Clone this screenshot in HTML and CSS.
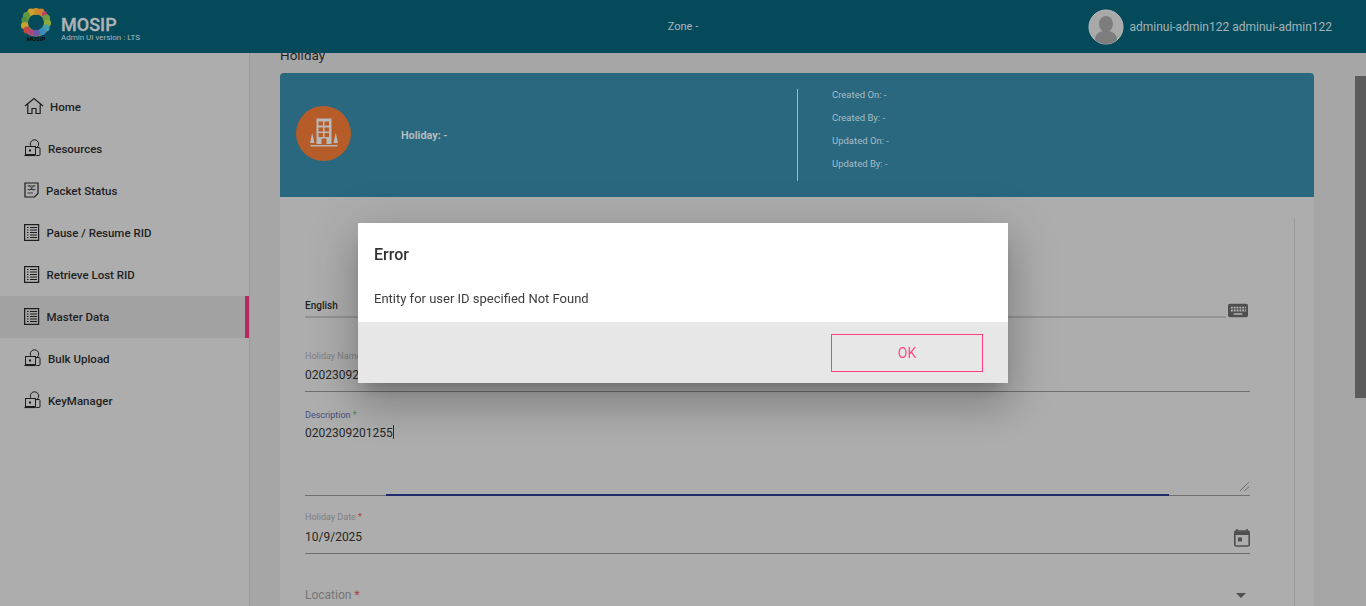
FILE: index.html
```html
<!DOCTYPE html>
<html lang="en">

<head>
    <meta charset="UTF-8">
    <meta name="viewport" content="width=device-width, initial-scale=1.0">
    <title>Holiday - Master Data</title>
    <link rel="stylesheet" href="styles.css">
</head>

<body>

    <header class="topbar">
        <div class="brand">
            <svg class="brand-logo" width="34" height="34" viewBox="0 0 34 34">
                <circle cx="17" cy="15.500" r="11" fill="none" stroke="#8f9a3a" stroke-width="6"/>
                <circle cx="17" cy="4.500" r="3.600" fill="#c98a2e"/>
                <circle cx="12" cy="5" r="3.400" fill="#c9a22e"/>
                <circle cx="22" cy="5" r="3.400" fill="#d0802e"/>
                <circle cx="25.500" cy="7" r="2.600" fill="#b5456a"/>
                <circle cx="7.500" cy="8.500" r="3.400" fill="#5f9a40"/>
                <circle cx="27.500" cy="11" r="3.600" fill="#6f9c3c"/>
                <circle cx="5.500" cy="13" r="3.200" fill="#4f8f45"/>
                <circle cx="28.500" cy="16" r="3.600" fill="#8fa83a"/>
                <circle cx="5.500" cy="18.500" r="3.600" fill="#c9a22e"/>
                <circle cx="27" cy="21" r="3.600" fill="#3f9fb0"/>
                <circle cx="8" cy="23" r="3.600" fill="#c24a3f"/>
                <circle cx="23" cy="24.500" r="3.600" fill="#3a8cc0"/>
                <circle cx="12.500" cy="25.500" r="3.200" fill="#b0467f"/>
                <circle cx="17.500" cy="26" r="3.600" fill="#6c5aa5"/>
                <circle cx="17" cy="15.500" r="7.400" fill="#054a5b"/>
                <text class="logo-word" x="17" y="33.500" text-anchor="middle">MOSIP</text>
            </svg>
            <div class="brand-text">
                <div class="brand-name">MOSIP</div>
                <div class="brand-version">Admin UI version : LTS</div>
            </div>
        </div>
        <div class="zone">Zone -</div>
        <div class="user">
            <svg class="avatar" width="36" height="36" viewBox="0 0 36 36">
                <circle cx="18" cy="18" r="17" fill="#a9a9a9" stroke="#bdbdbd" stroke-width="1"/>
                <ellipse cx="18" cy="15" rx="7" ry="8" fill="#7d7d7d"/>
                <path d="M7 31c0-6 4-8 8-9h6c4 1 8 3 8 9a17 17 0 0 1-22 0z" fill="#7d7d7d"/>
            </svg>
            <span class="user-name">adminui-admin122 adminui-admin122</span>
        </div>
    </header>

    <div class="layout">
        <nav class="sidebar">
            <a class="nav-item">
                <svg class="nav-icon" width="20" height="18" viewBox="0 0 20 18">
                    <path d="M1 9 10 1.500 19 9M3.800 7.500V16.500H8V11.500H12V16.500H16.200V7.500" fill="none" stroke="#1c1c1c" stroke-width="1.200"/>
                </svg>
                <span class="nav-home">Home</span>
            </a>
            <a class="nav-item">
                <svg class="nav-icon" width="18" height="18" viewBox="0 0 18 18">
                    <use href="#person-icon"/>
                </svg>
                <span class="nav-res">Resources</span>
            </a>
            <a class="nav-item">
                <svg class="nav-icon" width="16" height="16" viewBox="0 0 16 16">
                    <path d="M1 1h13v10.500L10.500 15H1z" fill="none" stroke="#1c1c1c" stroke-width="1.200"/>
                    <path d="M3.500 4H11.500M3.500 7.500H11.500M3.500 11H9M5 3 9.500 8.500M10.500 3 5.500 8.500" fill="none" stroke="#333" stroke-width=".9"/>
                </svg>
                <span class="nav-packet">Packet Status</span>
            </a>
            <a class="nav-item">
                <svg class="nav-icon" width="16" height="17" viewBox="0 0 16 17">
                    <use href="#list-icon"/>
                </svg>
                <span class="nav-list">Pause / Resume RID</span>
            </a>
            <a class="nav-item">
                <svg class="nav-icon" width="16" height="17" viewBox="0 0 16 17">
                    <use href="#list-icon"/>
                </svg>
                <span class="nav-list">Retrieve Lost RID</span>
            </a>
            <a class="nav-item active">
                <svg class="nav-icon" width="16" height="17" viewBox="0 0 16 17">
                    <use href="#list-icon"/>
                </svg>
                <span class="nav-list">Master Data</span>
            </a>
            <a class="nav-item">
                <svg class="nav-icon" width="18" height="18" viewBox="0 0 18 18">
                    <use href="#person-icon"/>
                </svg>
                <span class="nav-res">Bulk Upload</span>
            </a>
            <a class="nav-item">
                <svg class="nav-icon" width="18" height="18" viewBox="0 0 18 18">
                    <use href="#person-icon"/>
                </svg>
                <span class="nav-res">KeyManager</span>
            </a>
            <svg class="icon-defs" width="0" height="0">
                <symbol id="list-icon" viewBox="0 0 16 17">
                    <rect x=".6" y=".6" width="14" height="15.800" fill="none" stroke="#1c1c1c" stroke-width="1.200"/>
                    <path d="M3 3.500H4.500M6 3.500H13M3 6H4.500M6 6H13M3 8.500H4.500M6 8.500H13M3 11H4.500M6 11H13M3 13.500H4.500M6 13.500H13" stroke="#1c1c1c" stroke-width="1"/>
                </symbol>
                <symbol id="person-icon" viewBox="0 0 18 18">
                    <circle cx="10.500" cy="5" r="4.200" fill="none" stroke="#1c1c1c" stroke-width="1"/>
                    <rect x="1.500" y="7.500" width="10" height="8" fill="#adadad" stroke="#1c1c1c" stroke-width="1"/>
                    <rect x="11.500" y="8.500" width="4.500" height="8" rx="1" fill="none" stroke="#1c1c1c" stroke-width="1"/>
                    <path d="M.5 16.500H11.500" stroke="#1c1c1c" stroke-width="1.200"/>
                    <rect x="5" y="10.500" width="2" height="2" fill="#1c1c1c"/>
                </symbol>
            </svg>
        </nav>

        <main class="content">
            <h1 class="page-title">Holiday</h1>
            <section class="card-head">
                <div class="head-left">
                    <div class="head-badge">
                        <svg width="30" height="30" viewBox="0 0 30 30">
                            <path d="M7.500 .5h15V26h-15z" fill="#b9b9b9"/>
                            <path d="M9.500 3.500h4.500v4h-4.500zM15.500 3.500h4.500v4h-4.500zM9.500 9.500h4.500v4h-4.500zM15.500 9.500h4.500v4h-4.500zM9.500 15h4.500v4h-4.500zM15.500 15h4.500v4h-4.500zM12.500 20.500h5V26h-5z" fill="#b55c28"/>
                            <path d="M3.200 15 5.500 25H1z" fill="#b9b9b9"/>
                            <path d="M26.700 15 29 25h-4.500z" fill="#b9b9b9"/>
                            <path d="M1.500 27h27v1.500h-27z" fill="#b9b9b9"/>
                        </svg>
                    </div>
                    <div class="head-title">Holiday: -</div>
                </div>
                <div class="head-meta">
                    <div class="meta-list">
                        <div>Created On: -</div>
                        <div>Created By: -</div>
                        <div>Updated On: -</div>
                        <div>Updated By: -</div>
                    </div>
                </div>
            </section>
            <section class="card-body">
                <form class="form-col">
                    <div class="field-lang">
                        <div class="lang-input">English</div>
                        <svg class="keyboard" width="20" height="15" viewBox="0 0 21 15">
                            <rect width="21" height="14" x="0" y="0.500" rx="2" fill="#4f4f4f"/>
                            <path d="M3 3.500h2v2H3zM6 3.500h2v2H6zM9 3.500h2v2H9zM12 3.500h2v2h-2zM15 3.500h2v2h-2zM18 3.500h1v2h-1zM3 6.500h2v2H3zM6 6.500h2v2H6zM9 6.500h2v2H9zM12 6.500h2v2h-2zM15 6.500h2v2h-2zM18 6.500h1v2h-1zM6 10.500h9v1.500H6z" fill="#b5b5b5"/>
                        </svg>
                    </div>
                    <div class="field field-name">
                        <label class="field-label">Holiday Name</label>
                        <div class="field-value">0202309201255</div>
                    </div>
                    <div class="field field-desc">
                        <label class="field-label focused">Description <span class="mark-ok">*</span></label>
                        <div class="field-value">0202309201255<span class="caret"></span></div>
                        <svg class="resizer" width="9" height="9" viewBox="0 0 9 9">
                            <path d="M0 9 9 0M4.500 9 9 4.500" stroke="#333" stroke-width=".8" stroke-dasharray="1 .5"/>
                        </svg>
                        <div class="focus-line"></div>
                    </div>
                    <div class="field field-date">
                        <label class="field-label">Holiday Date <span class="mark-req">*</span></label>
                        <div class="field-value">10/9/2025</div>
                        <svg class="calendar" width="16" height="18" viewBox="0 0 16 18">
                            <path d="M3 0v2M13 0v2" stroke="#4f4f4f" stroke-width="1.600"/>
                            <rect x=".8" y="2" width="14.400" height="15" rx="1.500" fill="none" stroke="#4f4f4f" stroke-width="1.600"/>
                            <path d="M1 2.500h14v3.500H1z" fill="#4f4f4f"/>
                            <rect x="4" y="8.500" width="4" height="4" fill="#4f4f4f"/>
                        </svg>
                    </div>
                    <div class="field-select">
                        <span>Location <span class="mark-req">*</span></span>
                        <span class="select-arrow"></span>
                    </div>
                </form>
            </section>
        </main>

        <div class="scroll-track">
            <div class="scroll-thumb"></div>
        </div>
    </div>

    <div class="backdrop">
        <div class="dialog">
            <div class="dialog-main">
                <h2 class="dialog-title">Error</h2>
                <p class="dialog-msg">Entity for user ID specified Not Found</p>
            </div>
            <div class="dialog-foot">
                <button class="dialog-btn" type="button">OK</button>
            </div>
        </div>
    </div>

</body>

</html>
```

FILE: styles.css
```css
* {
    box-sizing: border-box;
}

html,
body {
    height: 100%;
}

body {
    margin: 0;
    padding: 0;
    overflow: hidden;
    display: flex;
    flex-direction: column;
    font-family: 'Roboto', 'Liberation Sans', sans-serif;
    background-color: #a6a6a6;
    color: #1c1c1c;
}

/* top bar */
.topbar {
    flex: 0 0 53px;
    display: grid;
    grid-template-columns: 1fr auto 1fr;
    align-items: center;
    background-color: #054a5b;
    position: relative;
    z-index: 2;
}

.brand {
    display: flex;
    align-items: center;
    padding-left: 19px;
}

.brand-logo {
    display: block;
    margin-top: -6px;
}

.logo-word {
    font-family: 'Roboto', sans-serif;
    font-size: 6px;
    font-weight: 700;
    fill: #0c0c0c;
}

.brand-text {
    margin-left: 8px;
    margin-top: 4px;
}

.brand-name {
    font-size: 18px;
    font-weight: 500;
    line-height: 17px;
    color: #aeb4b6;
    -webkit-text-stroke: .3px #aeb4b6;
}

.brand-version {
    font-size: 8px;
    line-height: 9px;
    color: #a9b5ba;
}

.zone {
    font-size: 11px;
    color: #adb6b9;
}

.user {
    display: flex;
    align-items: center;
    justify-content: flex-end;
    padding-right: 34px;
}

.avatar {
    display: block;
}

.user-name {
    margin-left: 5px;
    font-size: 12px;
    color: #a4b3b8;
}

/* main layout */
.layout {
    flex: 1;
    display: flex;
    min-height: 0;
}

.sidebar {
    flex: 0 0 250px;
    padding-top: 33px;
    background-color: #adadad;
    border-right: 1px solid #999;
}

.nav-item {
    display: flex;
    align-items: center;
    height: 42px;
    padding-left: 24px;
    font-size: 11.500px;
    font-weight: 500;
    color: #1f1f1f;
}

.nav-item.active {
    background-color: #a2a2a2;
    border-right: 4px solid #b32a5e;
}

.nav-icon {
    flex: none;
    margin-bottom: 2px;
}

.nav-home {
    margin-left: 6px;
}

.nav-res {
    margin-left: 6px;
}

.nav-packet {
    margin-left: 6px;
}

.nav-list {
    margin-left: 6.500px;
}

.icon-defs {
    position: absolute;
}

.content {
    width: 1105px;
    padding-left: 30px;
    overflow: hidden;
}

.page-title {
    margin: -6px 0 9px;
    font-size: 13.500px;
    font-weight: 400;
    line-height: 17px;
    color: #1f1f1f;
}

/* card */
.card-head {
    width: 1034px;
    height: 124px;
    display: flex;
    background-color: #2a687f;
    border-radius: 4px 4px 0 0;
}

.head-left {
    width: 517px;
    display: flex;
    align-items: center;
    padding: 0 0 4px 16px;
}

.head-badge {
    width: 55px;
    height: 55px;
    display: flex;
    align-items: center;
    justify-content: center;
    border-radius: 50%;
    background-color: #b55c28;
}

.head-title {
    margin-left: 50px;
    margin-top: 4px;
    font-size: 10.800px;
    font-weight: 700;
    color: #b6bcc0;
}

.head-meta {
    height: 92px;
    margin-top: 16px;
    padding: 0 0 0 34px;
    border-left: 1px solid #aab6bb;
    font-size: 9.500px;
    line-height: 23px;
    color: #a9bcc4;
}

.meta-list {
    margin-top: -6px;
}

.card-body {
    width: 1034px;
    height: 409px;
    padding: 21px 19px 0 25px;
    background-color: #adadad;
}

.form-col {
    height: 100%;
    padding-right: 44px;
    border-right: 1px solid #9a9a9a;
}

.field-lang {
    display: flex;
    align-items: flex-end;
    height: 100px;
}

.lang-input {
    flex: 1;
    padding-bottom: 4px;
    border-bottom: 2px solid #949494;
    font-size: 10px;
    font-weight: 500;
    line-height: 13px;
    color: #222;
}

.keyboard {
    display: block;
    margin-left: 2px;
    margin-right: 2px;
}

.field {
    position: relative;
    border-bottom: 1px solid #6f6f6f;
}

.field-name {
    margin-top: 33px;
    height: 41px;
}

.field-desc {
    margin-top: 18px;
    height: 86px;
}

.field-date {
    margin-top: 16px;
    height: 42px;
}

.field-label {
    display: block;
    font-size: 9px;
    line-height: 11px;
    color: #7f7f7f;
}

.field-label.focused {
    color: #444f80;
}

.mark-ok {
    color: #3f8f5a;
}

.mark-req {
    color: #b23a45;
}

.field-value {
    margin-top: 4px;
    font-size: 12px;
    line-height: 15px;
    color: #262626;
}

.field-name .field-value {
    margin-top: 6px;
}

.field-date .field-value {
    margin-top: 7px;
}

.caret {
    display: inline-block;
    width: 1px;
    height: 14px;
    vertical-align: -2px;
    background-color: #1f2a6b;
}

.resizer {
    position: absolute;
    right: 1px;
    bottom: 4px;
}

.focus-line {
    position: absolute;
    left: 81px;
    right: 81px;
    bottom: -1px;
    height: 2px;
    background-color: #1f2a6b;
}

.calendar {
    position: absolute;
    right: 0;
    bottom: 6px;
}

.field-select {
    display: flex;
    justify-content: space-between;
    align-items: center;
    margin-top: 34px;
    padding-right: 4px;
    font-size: 12px;
    line-height: 15px;
    color: #757575;
}

.select-arrow {
    width: 0;
    height: 0;
    border-left: 5px solid transparent;
    border-right: 5px solid transparent;
    border-top: 5px solid #4f4f4f;
}

/* fake scrollbar */
.scroll-track {
    flex: 1;
    padding-top: 23px;
    display: flex;
    justify-content: flex-end;
}

.scroll-thumb {
    width: 11px;
    height: 322px;
    background-color: #5b5b5b;
}

/* error dialog */
.backdrop {
    position: fixed;
    top: 0;
    right: 0;
    bottom: 0;
    left: 0;
    z-index: 5;
    display: flex;
    align-items: center;
    justify-content: center;
}

.dialog {
    width: 650px;
    height: 160px;
    display: flex;
    flex-direction: column;
    background-color: #fff;
    box-shadow: 0 11px 15px -7px rgba(0, 0, 0, 0.2), 0 24px 38px 3px rgba(0, 0, 0, 0.14), 0 9px 46px 8px rgba(0, 0, 0, 0.12);
}

.dialog-main {
    height: 99px;
    padding: 22px 16px 0;
}

.dialog-title {
    margin: 0;
    font-size: 16px;
    font-weight: 500;
    line-height: 19px;
    color: #333;
}

.dialog-msg {
    margin: 27px 0 0;
    font-size: 13px;
    line-height: 16px;
    color: #3d3d3d;
}

.dialog-foot {
    flex: 1;
    display: flex;
    justify-content: flex-end;
    align-items: center;
    padding-right: 25px;
    background-color: #e6e7e6;
}

.dialog-btn {
    width: 152px;
    height: 38px;
    border: 1px solid #ff3d7f;
    background: none;
    font-family: 'Roboto', sans-serif;
    font-size: 14px;
    color: #ff4b86;
}
```
